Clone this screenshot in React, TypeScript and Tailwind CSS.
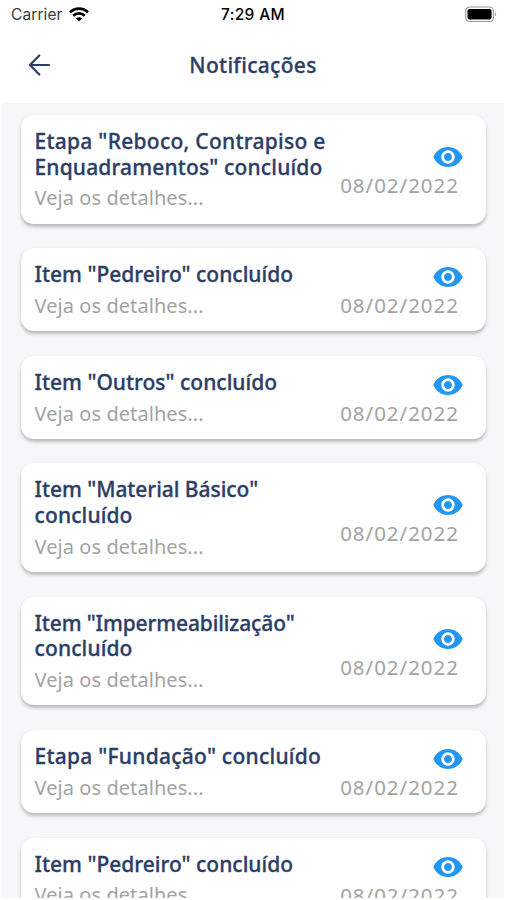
import { MdVisibility } from "react-icons/md";

type Line = { text: string; tracking: string };

type Notification = {
    id: number;
    title: Line[];
    date: string;
};

const notifications: Notification[] = [
    {
        id: 1,
        title: [
            { text: 'Etapa "Reboco, Contrapiso e', tracking: "tracking-[0.27px]" },
            { text: 'Enquadramentos" concluído', tracking: "tracking-[0.15px]" },
        ],
        date: "08/02/2022",
    },
    { id: 2, title: [{ text: 'Item "Pedreiro" concluído', tracking: "tracking-[0px]" }], date: "08/02/2022" },
    { id: 3, title: [{ text: 'Item "Outros" concluído', tracking: "tracking-[0px]" }], date: "08/02/2022" },
    {
        id: 4,
        title: [
            { text: 'Item "Material Básico"', tracking: "tracking-[-0.04px]" },
            { text: "concluído", tracking: "tracking-[0.12px]" },
        ],
        date: "08/02/2022",
    },
    {
        id: 5,
        title: [
            { text: 'Item "Impermeabilização"', tracking: "tracking-[-0.13px]" },
            { text: "concluído", tracking: "tracking-[0.12px]" },
        ],
        date: "08/02/2022",
    },
    { id: 6, title: [{ text: 'Etapa "Fundação" concluído', tracking: "tracking-[0.25px]" }], date: "08/02/2022" },
    { id: 7, title: [{ text: 'Item "Pedreiro" concluído', tracking: "tracking-[0px]" }], date: "08/02/2022" },
];

function StatusBar() {
    return (
        <div className="grid h-7 grid-cols-3 items-center pt-px pl-[11px] pr-[10px] font-['Inter',sans-serif] text-[15.5px] leading-7 text-black">
            <div className="flex items-center gap-[6px] text-[#3a3a3a]">
                <span className="tracking-[0.1px]">Carrier</span>
                <svg className="-mt-[2px]" width="20" height="15" viewBox="0 0 20 15" fill="none" stroke="#000" strokeWidth="2.7">
                    <path d="M1 5.3C6 .3 14 .3 19 5.3" />
                    <path d="M4.2 8.7C7.4 5.6 12.6 5.6 15.8 8.7" />
                    <path d="M10 14.6 6.9 11.4C8.6 9.8 11.4 9.8 13.1 11.4Z" fill="#000" stroke="none" />
                </svg>
            </div>
            <span className="-ml-[2px] text-center font-medium tracking-[0.35px]">7:29 AM</span>
            <svg className="-mt-px justify-self-end" width="32" height="17" viewBox="0 0 33 17">
                <rect x="0.75" y="0.75" width="28.5" height="15" rx="4" fill="none" stroke="#9a9a9a" strokeWidth="1.2" />
                <rect x="2.6" y="2.7" width="24.8" height="11" rx="2" fill="#000" />
                <path d="M31 6v4.6c1.6-.7 1.6-3.9 0-4.6Z" fill="#9a9a9a" />
            </svg>
        </div>
    );
}

function Header() {
    return (
        <header className="grid h-[75px] grid-cols-[1fr_auto_1fr] items-center px-[28px] text-[#2c3e66]">
            <svg className="-mt-px" width="23" height="22" viewBox="0 0 23 22" fill="none" stroke="currentColor" strokeWidth="2.2" strokeLinecap="round" strokeLinejoin="round">
                <path d="M21 11H2M11.3 1.5 2 11l9.3 9.5" />
            </svg>
            <h1 className="-ml-px text-[21px] font-medium tracking-[0.3px] [-webkit-text-stroke:0.3px]">Notificações</h1>
        </header>
    );
}

function NotificationCard({ title, date }: Notification) {
    return (
        <li className="flex items-center justify-between rounded-[13px] bg-white pt-[14px] pr-[22px] pb-[12.2px] pl-[13.5px] shadow-[0_2.5px_3.5px_rgba(0,0,0,0.24)]">
            <div className="whitespace-nowrap">
                <h2 className="text-[21px] leading-[25.7px] font-medium text-[#2c3e66] [-webkit-text-stroke:0.3px]">
                    {title.map((line) => (
                        <span key={line.text} className={`block ${line.tracking}`}>{line.text}</span>
                    ))}
                </h2>
                <p className="mt-[5px] text-[20px] leading-[26px] tracking-[0.07px] text-[#a3a3a3]">Veja os detalhes...</p>
            </div>
            <div className="-mt-[2px] flex flex-col items-end">
                <MdVisibility className="size-8 text-[#2196f3]" />
                <span className="mr-[5px] text-[20.5px] leading-[24.5px] tracking-[0.98px] text-[#a3a3a3]">{date}</span>
            </div>
        </li>
    );
}

export default function App() {
    return (
        <div className="flex h-[900px] w-[507px] flex-col overflow-hidden bg-white pb-[2px] font-['Noto_Sans',sans-serif]">
            <StatusBar />
            <Header />
            <main className="mr-[3px] ml-[2px] min-h-0 flex-1 overflow-hidden bg-[#f6f7f9] pt-[12px] pr-[18px] pl-[19px]">
                <ul className="flex flex-col gap-[24.7px]">
                    {notifications.map((item) => (
                        <NotificationCard key={item.id} {...item} />
                    ))}
                </ul>
            </main>
        </div>
    );
}
